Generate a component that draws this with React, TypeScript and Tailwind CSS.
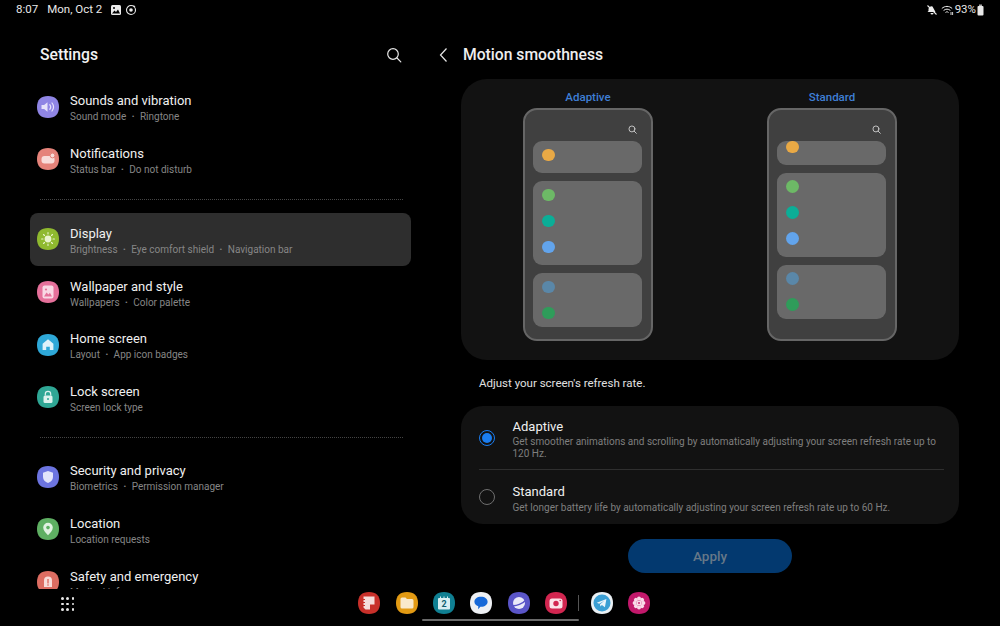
import React from "react";

const font = { fontFamily: "Roboto, 'Liberation Sans', sans-serif" };

function Squircle({ color, children }: { color: string; children?: React.ReactNode }) {
  return (
    <svg width="22" height="22" viewBox="0 0 22 22" className="shrink-0">
      <path d="M11 0C18 0 22 3.600 22 11C22 18.400 18 22 11 22C4 22 0 18.400 0 11C0 3.600 4 0 11 0Z" fill={color} />
      {children}
    </svg>
  );
}

const icons: Record<string, React.ReactNode> = {
  sound: (
    <Squircle color="#8f85e4">
      <path d="M4.500 9h2.600L10.500 6.200v9.600L7.100 13H4.500z" fill="#e6e2fa" />
      <path d="M12.800 8.600c1.100 1.400 1.100 3.400 0 4.800M15 7c1.900 2.400 1.900 5.600 0 8" fill="none" stroke="#e6e2fa" strokeWidth="1.200" strokeLinecap="round" />
    </Squircle>
  ),
  notif: (
    <Squircle color="#e5837a">
      <rect x="4.500" y="8" width="13" height="7.500" rx="3" fill="#f8dcd9" />
      <circle cx="15.500" cy="7.500" r="2.400" fill="#f8dcd9" stroke="#e5837a" strokeWidth="1" />
    </Squircle>
  ),
  display: (
    <Squircle color="#8fb92f">
      <circle cx="11" cy="11" r="3.400" fill="#e9f3cc" />
      <path d="M11 4.600v1.400M11 16v1.400M4.600 11H6M16 11h1.400M6.500 6.500l1 1M14.500 14.500l1 1M6.500 15.500l1-1M14.500 7.500l1-1" stroke="#e9f3cc" strokeWidth="1.100" strokeLinecap="round" />
    </Squircle>
  ),
  wallpaper: (
    <Squircle color="#e5709a">
      <rect x="5.500" y="4.500" width="11" height="13" rx="2" fill="#f9d8e4" />
      <circle cx="9" cy="8.500" r="1.100" fill="#e5709a" />
      <path d="M7 15.500l2.500-3.900 2 2 1.400-1.800 2.100 3.700z" fill="#e5709a" />
    </Squircle>
  ),
  home: (
    <Squircle color="#2ea8d8">
      <path d="M11 5.200l5.400 4.600V16h-3.600v-3.200H9.200V16H5.600V9.800z" fill="#def2fa" />
    </Squircle>
  ),
  lock: (
    <Squircle color="#2fa795">
      <rect x="6.500" y="9.500" width="9" height="7.500" rx="1.500" fill="#dcf2ee" />
      <path d="M8.300 9.500V8a2.700 2.700 0 015.400 0v1.500" fill="none" stroke="#dcf2ee" strokeWidth="1.200" />
      <circle cx="11" cy="13" r="1" fill="#2fa795" />
    </Squircle>
  ),
  security: (
    <Squircle color="#6c74e0">
      <path d="M11 5l5 1.700v4.400c0 3-2.100 5-5 6-2.900-1-5-3-5-6V6.700z" fill="#e2e4fa" />
    </Squircle>
  ),
  location: (
    <Squircle color="#5eaf62">
      <path d="M11 4.800a4.800 4.800 0 014.800 4.800c0 3-2.800 5.600-4.800 7.600-2-2-4.800-4.600-4.800-7.600A4.800 4.800 0 0111 4.800z" fill="#e0f1e1" />
      <circle cx="11" cy="9.600" r="1.800" fill="#5eaf62" />
    </Squircle>
  ),
  safety: (
    <Squircle color="#dd6d62">
      <path d="M7 16V9.500a4 4 0 018 0V16z" fill="#f8dcd9" />
      <rect x="10.300" y="8" width="1.400" height="4.500" fill="#dd6d62" />
      <rect x="10.300" y="13.300" width="1.400" height="1.400" fill="#dd6d62" />
    </Squircle>
  ),
};

function Row({ icon, title, sub, active }: { icon: string; title: string; sub: string[]; active?: boolean }) {
  return (
    <div className={`flex h-[52.600px] shrink-0 items-center gap-[11px] rounded-[8px] px-[7px] ${active ? "bg-[#2e2e2e]" : ""}`}>
      {icons[icon]}
      <div className="flex min-w-0 flex-col pt-[4px]">
        <div className="text-[13px] leading-[16px] text-[#f0f0f0]">{title}</div>
        <div className="flex items-center text-[10px] leading-[15px] text-[#868686]">
          {sub.map((s, i) => (
            <React.Fragment key={s}>
              {i > 0 && <span className="mx-[5.500px] text-[8px]">•</span>}
              <span>{s}</span>
            </React.Fragment>
          ))}
        </div>
      </div>
    </div>
  );
}

function Divider({ h }: { h: number }) {
  return (
    <div className="flex shrink-0 items-center pl-[10px] pr-[8px]" style={{ height: h }}>
      <div className="w-full border-t border-dotted border-[#444444]" />
    </div>
  );
}

function Search({ size, color, sw }: { size: number; color: string; sw: number }) {
  return (
    <svg width={size} height={size} viewBox="0 0 16 16" fill="none" stroke={color} strokeWidth={sw} strokeLinecap="round">
      <circle cx="7" cy="7" r="5.300" />
      <path d="M11 11l3.800 3.800" />
    </svg>
  );
}

function Card({ h, top, dots }: { h: number; top: number; dots: string[] }) {
  return (
    <div className="flex shrink-0 flex-col gap-[13.500px] rounded-[9px] bg-[#696969] pl-[9px]" style={{ height: h, paddingTop: top }}>
      {dots.map((c) => (
        <div key={c} className="h-[12.500px] w-[12.500px] rounded-full" style={{ backgroundColor: c }} />
      ))}
    </div>
  );
}

function Phone({ label, firstH, firstTop }: { label: string; firstH: number; firstTop: number }) {
  return (
    <div className="flex w-[130px] flex-col items-center">
      <div className="mb-[3px] flex h-[26px] items-end pb-[1px] text-[11.500px] font-medium leading-[14px] text-[#3f7fd6]">{label}</div>
      <div className="flex h-[233px] w-full flex-col rounded-[14px] border-2 border-[#666666] bg-[#404040] pl-[8px] pr-[9px]">
        <div className="flex h-[30.700px] shrink-0 items-end justify-end pb-[6.700px] pr-[5.500px]">
          <Search size={9} color="#d0d0d0" sw={1.600} />
        </div>
        <div className="flex flex-col gap-[8px]">
          <Card h={firstH} top={firstTop} dots={["#e9a945"]} />
          <Card h={84} top={7.500} dots={["#6db966", "#0bae97", "#62a4ec"]} />
          <Card h={54} top={7.500} dots={["#5a87a8", "#2f9c5a"]} />
        </div>
      </div>
    </div>
  );
}

function Radio({ on }: { on?: boolean }) {
  return on ? (
    <div className="flex h-[16px] w-[16px] shrink-0 items-center justify-center rounded-full border-[1.500px] border-[#1a7df0]">
      <div className="h-[10px] w-[10px] rounded-full bg-[#1a7df0]" />
    </div>
  ) : (
    <div className="h-[16px] w-[16px] shrink-0 rounded-full border border-[#6f6f6f]" />
  );
}

const dock: React.ReactNode[] = [
  <Squircle key="notes" color="#c8302a">
    <path d="M5.500 4.500h11v8h-4.500V17.500H7.500l-2-2z" fill="#f5dedc" />
    <path d="M4.500 7.500h2.500M4.500 10.500h2.500M4.500 13.500h2.500" stroke="#c8302a" strokeWidth="1" />
  </Squircle>,
  <Squircle key="files" color="#e29a13">
    <path d="M4.500 7a1.500 1.500 0 011.500-1.500h3.500l1.500 1.500h5a1.500 1.500 0 011.500 1.500v6.500a1.500 1.500 0 01-1.500 1.500H6a1.500 1.500 0 01-1.500-1.500z" fill="#f9e9cb" />
  </Squircle>,
  <div key="cal" className="relative h-[22px] w-[22px] shrink-0">
    <Squircle color="#0f7f92">
      <rect x="5" y="6" width="12" height="11.500" rx="1" fill="#d8eef2" />
      <path d="M7.500 4.500v2M11 4.500v2M14.500 4.500v2" stroke="#d8eef2" strokeWidth="1" />
    </Squircle>
    <span className="absolute inset-x-0 top-[6px] text-center text-[9px] font-bold leading-[12px] text-[#0f5f70]">2</span>
  </div>,
  <Squircle key="msg" color="#eef0f4">
    <path d="M11 4.800c3.900 0 6.600 2.100 6.600 5 0 2.900-2.700 5-6.600 5l-.6 0-2.300 2.400.2-3C6 13.500 4.400 11.900 4.400 9.800c0-2.900 2.700-5 6.600-5z" fill="#1668d8" />
  </Squircle>,
  <Squircle key="net" color="#5a55c8">
    <circle cx="11" cy="11" r="6" fill="#ebeaf9" />
    <path d="M3.500 13.500C8 14.500 15 11.500 18.500 7.500" fill="none" stroke="#5a55c8" strokeWidth="1.500" />
  </Squircle>,
  <Squircle key="cam" color="#d22650">
    <rect x="4.500" y="6.500" width="13" height="10" rx="2.500" fill="#fbe3e9" />
    <circle cx="11" cy="11.500" r="2.700" fill="#d22650" />
    <circle cx="15.200" cy="8.500" r="0.800" fill="#d22650" />
  </Squircle>,
  null,
  <Squircle key="tg" color="#eaf1f5">
    <circle cx="11" cy="11" r="8.500" fill="#3a9fd4" />
    <path d="M5.800 10.800l9.600-3.900-1.500 8.400-3-2.200-1.500 1.500-.4-2.400 4.300-3.500-5.200 3.100z" fill="#eaf4fa" />
  </Squircle>,
  <Squircle key="bl" color="#c2186b">
    {[0, 45, 90, 135, 180, 225, 270, 315].map((a) => (
      <circle key={a} cx="11" cy="6.600" r="2" fill="#f9dbe9" transform={`rotate(${a} 11 11)`} />
    ))}
    <circle cx="11" cy="11" r="2.600" fill="#f9dbe9" />
    <circle cx="11" cy="11" r="0.900" fill="#c2186b" />
  </Squircle>,
];

export default function App() {
  return (
    <div className="flex h-[626px] w-[1000px] flex-col overflow-hidden bg-black" style={font}>
      {/* status bar */}
      <div className="flex h-[20px] shrink-0 items-center pl-[16px] pr-[16px] text-[11.500px] text-[#e8e8e8]">
        <span>8:07</span>
        <span className="ml-[9px]">Mon, Oct 2</span>
        <svg width="12" height="12" viewBox="0 0 12 12" className="ml-[8px]">
          <rect x="1" y="1" width="10" height="10" rx="1.500" fill="#ececec" />
          <circle cx="4" cy="4" r="1" fill="#000" />
          <path d="M2 9.500l2.500-3 1.500 1.500 2-2.500 2 4z" fill="#000" />
        </svg>
        <svg width="12" height="12" viewBox="0 0 12 12" fill="none" stroke="#ececec" className="ml-[3px]">
          <circle cx="6" cy="6" r="4.500" strokeWidth="1.100" />
          <circle cx="6" cy="6" r="1.800" fill="#ececec" stroke="none" />
          <path d="M8.500 1l2 1.500-2 .8z" fill="#ececec" stroke="none" />
        </svg>
        <div className="flex-1" />
        <svg width="12" height="12" viewBox="0 0 12 12" className="mr-[3px]">
          <path d="M1.500 8l1-1V5a3 3 0 014-2.500l3 5.500H1.500zM4.500 9h3a1.500 1.500 0 01-3 0z" fill="#ececec" />
          <path d="M1.500 1.500l9 9" stroke="#ececec" strokeWidth="1.100" />
        </svg>
        <svg width="13" height="11" viewBox="0 0 13 11" fill="none" stroke="#ececec" strokeWidth="1">
          <path d="M.8 3.500c3-2.800 7.400-2.800 10.400 0M2.600 5.500c2-1.800 4.800-1.800 6.800 0M4.500 7.500c1-.9 2-.9 3 0" />
          <path d="M10 7v3M11.600 7v3" strokeWidth="0.900" />
        </svg>
        <span className="ml-[1px]">93%</span>
        <svg width="7" height="12" viewBox="0 0 7 12" className="ml-[1px]">
          <rect x="2" y="0.500" width="3" height="1.500" fill="#aaaaaa" />
          <rect x="0.500" y="2" width="6" height="9.500" rx="1" fill="#e8e8e8" />
        </svg>
      </div>

      {/* main */}
      <div className="flex h-[569px] shrink-0">
        {/* left */}
        <div className="flex w-[441px] shrink-0 flex-col overflow-hidden pl-[30px] pr-[30px]">
          <div className="flex h-[60.400px] shrink-0 items-center justify-between pl-[10px] pr-[0.500px] pt-[10px]">
            <span className="text-[15.700px] font-medium leading-[22px] text-[#f2f2f2]">Settings</span>
            <div className="pr-[8.500px]">
              <Search size={16} color="#e8e8e8" sw={1.200} />
            </div>
          </div>
          <Row icon="sound" title="Sounds and vibration" sub={["Sound mode", "Ringtone"]} />
          <Row icon="notif" title="Notifications" sub={["Status bar", "Do not disturb"]} />
          <Divider h={27.600} />
          <Row icon="display" title="Display" sub={["Brightness", "Eye comfort shield", "Navigation bar"]} active />
          <Row icon="wallpaper" title="Wallpaper and style" sub={["Wallpapers", "Color palette"]} />
          <Row icon="home" title="Home screen" sub={["Layout", "App icon badges"]} />
          <Row icon="lock" title="Lock screen" sub={["Screen lock type"]} />
          <Divider h={27} />
          <Row icon="security" title="Security and privacy" sub={["Biometrics", "Permission manager"]} />
          <Row icon="location" title="Location" sub={["Location requests"]} />
          <Row icon="safety" title="Safety and emergency" sub={["Medical info"]} />
        </div>

        {/* right */}
        <div className="flex w-[518px] shrink-0 flex-col pl-[20px]">
          <div className="flex h-[59px] shrink-0 items-center pl-[2px] pt-[11px]">
            <svg width="10" height="16" viewBox="0 0 10 16" fill="none" stroke="#e8e8e8" strokeWidth="1.200" className="-ml-[24px] mr-[14px]">
              <path d="M7.500 1.500L1.500 8 7.500 14.500" />
            </svg>
            <span className="text-[15.700px] font-medium leading-[22px] text-[#eeeeee]">Motion smoothness</span>
          </div>

          <div className="flex h-[281px] shrink-0 justify-center gap-[114px] rounded-[26px] bg-[#121212]">
            <Phone label="Adaptive" firstH={32.500} firstTop={8} />
            <Phone label="Standard" firstH={24} firstTop={0} />
          </div>

          <div className="flex h-[46px] shrink-0 items-center pl-[18px] pt-[2px] text-[11.500px] text-[#e0e0e0]">Adjust your screen's refresh rate.</div>

          <div className="flex h-[118px] shrink-0 flex-col rounded-[22px] bg-[#121212] pl-[18px] pr-[15px]">
            <div className="flex h-[64px] shrink-0 items-center gap-[17.500px] border-b border-[#2f2f2f]">
              <Radio on />
              <div className="pt-[2px]">
                <div className="text-[13px] leading-[18px] text-[#f0f0f0]">Adaptive</div>
                <div className="text-[10px] leading-[12px] text-[#7f7f7f]">
                  Get smoother animations and scrolling by automatically adjusting your screen refresh rate up to 120 Hz.
                </div>
              </div>
            </div>
            <div className="flex flex-1 items-center gap-[17.500px]">
              <Radio />
              <div className="pt-[3px]">
                <div className="text-[13px] leading-[18px] text-[#f0f0f0]">Standard</div>
                <div className="text-[10px] leading-[13px] text-[#7f7f7f]">
                  Get longer battery life by automatically adjusting your screen refresh rate up to 60 Hz.
                </div>
              </div>
            </div>
          </div>

          <div className="mt-[15px] flex h-[34px] w-[164px] shrink-0 items-center justify-center self-center rounded-full bg-[#03396f] text-[13.500px] font-medium text-[#677888]">
            Apply
          </div>
        </div>
      </div>

      {/* dock */}
      <div className="flex flex-1 flex-col">
        <div className="flex h-[28px] shrink-0 items-center pl-[61px]">
          <div className="mt-[2px] grid grid-cols-3 gap-[2.500px]">
            {Array.from({ length: 9 }).map((_, i) => (
              <div key={i} className="h-[2.800px] w-[2.800px] rounded-full bg-[#e8e8e8]" />
            ))}
          </div>
          <div className="ml-[284px] flex items-center gap-[15.300px]">
            {dock.map((d, i) => d ?? <div key={i} className="mx-[-3.800px] h-[16px] w-px bg-[#555555]" />)}
          </div>
        </div>
        <div className="mt-[2px] h-[2px] w-[157px] self-center rounded-full bg-[#6a6a6a]" />
      </div>
    </div>
  );
}
